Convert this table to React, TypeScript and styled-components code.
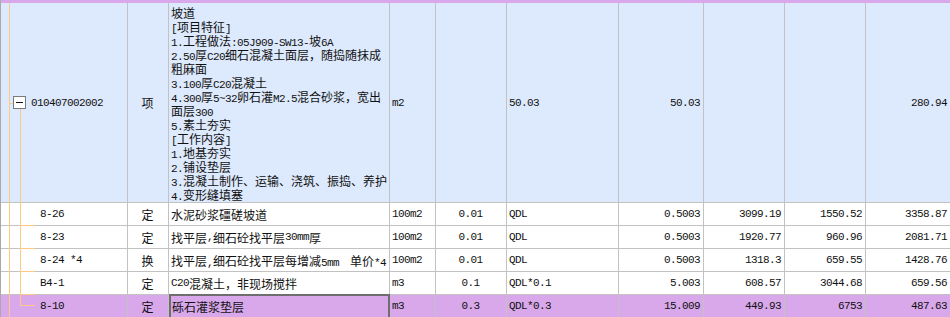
import React from "react";
import styled, { createGlobalStyle, css } from "styled-components";

const GlobalStyle = createGlobalStyle`
    html, body {
        margin: 0;
        padding: 0;
        background: #ffffff;
    }
    body {
        font-family: "Noto Sans CJK SC", "Noto Sans", sans-serif;
        font-size: 12px;
        color: #111;
    }
`

const COLS = "127px 41px 221px 46px 71px 112px 85px 81px 81px 85px";

const Grid = styled.div`
    width: 950px;
    height: 317px;
    overflow: hidden;
    position: relative;
    border-left: 1px solid #a9a9a9;
    box-sizing: border-box;
`

const TopStrip = styled.div`
    height: 3px;
    background: #d8a8ea;
`

const Row = styled.div<{ $bg: string; $h: number }>`
    display: grid;
    grid-template-columns: ${COLS};
    height: ${p => p.$h}px;
    background: ${p => p.$bg};
    border-bottom: 1px solid #c2c2c2;
    box-sizing: border-box;
`

const Cell = styled.div<{ $align?: "left" | "center" | "right"; $selected?: boolean }>`
    border-right: 1px solid #c2c2c2;
    box-sizing: border-box;
    display: flex;
    align-items: center;
    padding: 0 3px 0 2px;
    white-space: nowrap;
    overflow: hidden;
    position: relative;
    justify-content: ${p => p.$align === "right" ? "flex-end" : p.$align === "center" ? "center" : "flex-start"};
    ${p => p.$selected && css`
        border: 2px solid #6e6e6e;
        border-bottom: none;
        margin-top: -1px;
        padding-left: 1px;
    `}
`

const TreeCell = styled(Cell)<{ $last?: boolean; $parent?: boolean }>`
    padding-left: ${p => p.$parent ? "30px" : "39px"};
    overflow: visible;
    &::before {
        content: "";
        position: absolute;
        left: 8px;
        top: 0;
        bottom: -1px;
        width: 1px;
        background: #ffc784;
    }
    ${p => !p.$parent && css`
        &::after {
            content: "";
            position: absolute;
            left: 19px;
            top: 0;
            height: ${p.$last ? "50%" : "calc(100% + 1px)"};
            width: 15px;
            border-left: 1px solid #ffc784;
            border-bottom: 1px solid #ffc784;
            box-sizing: border-box;
        }
    `}
`

const Expander = styled.span`
    position: absolute;
    left: 12px;
    top: 50%;
    margin-top: -7px;
    width: 13px;
    height: 13px;
    box-sizing: border-box;
    border: 1px solid #7a7a7a;
    background: #fff;
    display: flex;
    align-items: center;
    justify-content: center;
    &::before {
        content: "";
        width: 7px;
        height: 1px;
        background: #111;
    }
`

const Stem = styled.span`
    position: absolute;
    left: 19px;
    top: calc(50% + 6px);
    bottom: -1px;
    width: 1px;
    background: #ffc784;
`

const Hook = styled.span`
    position: absolute;
    left: 9px;
    top: 50%;
    width: 3px;
    height: 1px;
    background: #ffc784;
`

const Focus = styled.span`
    position: absolute;
    left: -1px;
    top: 0;
    bottom: 0;
    width: 1px;
    background: #3d8ff0;
`

const DescBlock = styled.div`
    align-self: flex-start;
    padding-top: 3px;
    white-space: nowrap;
    > div {
        height: 14px;
        line-height: 14px;
    }
`

const Spread = styled.div`
    display: flex;
    justify-content: space-between;
    width: 100%;
`

const Mono = styled.span`
    font-family: "Liberation Mono", "DejaVu Sans Mono", monospace;
    font-size: 11px;
    letter-spacing: -0.6px;
`

const Txt = ({ children }: { children: string }) => {
    const parts = children.match(/[\x00-\x7f]+|[^\x00-\x7f]+/g) || [];
    return (
        <>
            {parts.map((s, i) =>
                /^[\x00-\x7f]/.test(s) ? <Mono key={i}>{s}</Mono> : <span key={i}>{s}</span>
            )}
        </>
    );
};

const descLines = [
    "坡道",
    "[项目特征]",
    "1.工程做法:05J909-SW13-坡6A",
    "2.50厚C20细石混凝土面层，随捣随抹成",
    "粗麻面",
    "3.100厚C20混凝土",
    "4.300厚5~32卵石灌M2.5混合砂浆，宽出",
    "面层300",
    "5.素土夯实",
    "[工作内容]",
    "1.地基夯实",
    "2.铺设垫层",
    "3.混凝土制作、运输、浇筑、振捣、养护",
    "4.变形缝填塞",
];

type Item = {
    code: string;
    kind: string;
    name: string;
    suffix?: string;
    unit: string;
    coef: string;
    expr: string;
    qty: string;
    a: string;
    b: string;
    c: string;
};

const items: Item[] = [
    { code: "8-26", kind: "定", name: "水泥砂浆礓磋坡道", unit: "100m2", coef: "0.01", expr: "QDL", qty: "0.5003", a: "3099.19", b: "1550.52", c: "3358.87" },
    { code: "8-23", kind: "定", name: "找平层,细石砼找平层30mm厚", unit: "100m2", coef: "0.01", expr: "QDL", qty: "0.5003", a: "1920.77", b: "960.96", c: "2081.71" },
    { code: "8-24 *4", kind: "换", name: "找平层,细石砼找平层每增减5mm", suffix: "单价*4", unit: "100m2", coef: "0.01", expr: "QDL", qty: "0.5003", a: "1318.3", b: "659.55", c: "1428.76" },
    { code: "B4-1", kind: "定", name: "C20混凝土，非现场搅拌", unit: "m3", coef: "0.1", expr: "QDL*0.1", qty: "5.003", a: "608.57", b: "3044.68", c: "659.56" },
    { code: "8-10", kind: "定", name: "砾石灌浆垫层", unit: "m3", coef: "0.3", expr: "QDL*0.3", qty: "15.009", a: "449.93", b: "6753", c: "487.63" },
];

const App = () => {
    return (
        <Grid>
            <GlobalStyle />
            <TopStrip />
            <Row $bg="#dde9fc" $h={200}>
                <TreeCell $parent>
                    <Hook />
                    <Expander />
                    <Stem />
                    <Txt>010407002002</Txt>
                </TreeCell>
                <Cell $align="center">项</Cell>
                <Cell>
                    <DescBlock>
                        {descLines.map((l, i) => <div key={i}><Txt>{l}</Txt></div>)}
                    </DescBlock>
                </Cell>
                <Cell><Txt>m2</Txt></Cell>
                <Cell />
                <Cell><Txt>50.03</Txt></Cell>
                <Cell $align="right"><Txt>50.03</Txt></Cell>
                <Cell />
                <Cell />
                <Cell $align="right"><Txt>280.94</Txt></Cell>
            </Row>
            {items.map((it, i) => {
                const last = i === items.length - 1;
                return (
                    <Row key={it.code} $bg={last ? "#d8a8ea" : "#ffffff"} $h={23}>
                        <TreeCell $last={last}>
                            {last && <Focus />}
                            <Txt>{it.code}</Txt>
                        </TreeCell>
                        <Cell $align="center">{it.kind}</Cell>
                        <Cell $selected={last}>
                            {it.suffix ? (
                                <Spread>
                                    <span><Txt>{it.name}</Txt></span>
                                    <span><Txt>{it.suffix}</Txt></span>
                                </Spread>
                            ) : (
                                <Txt>{it.name}</Txt>
                            )}
                        </Cell>
                        <Cell><Txt>{it.unit}</Txt></Cell>
                        <Cell $align="center"><Txt>{it.coef}</Txt></Cell>
                        <Cell><Txt>{it.expr}</Txt></Cell>
                        <Cell $align="right"><Txt>{it.qty}</Txt></Cell>
                        <Cell $align="right"><Txt>{it.a}</Txt></Cell>
                        <Cell $align="right"><Txt>{it.b}</Txt></Cell>
                        <Cell $align="right"><Txt>{it.c}</Txt></Cell>
                    </Row>
                );
            })}
        </Grid>
    );
};

export default App;
